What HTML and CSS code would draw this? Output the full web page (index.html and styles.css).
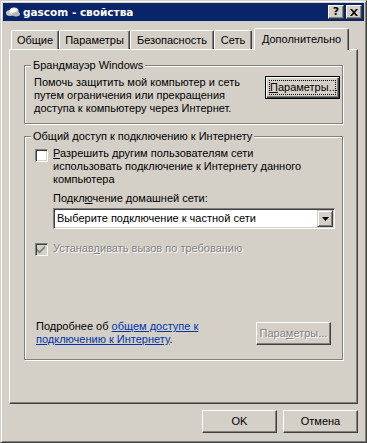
FILE: index.html
```html
<!DOCTYPE html>
<html lang="ru">
<head>
    <meta charset="UTF-8">
    <title>gascom - свойства</title>
    <link rel="stylesheet" href="styles.css">
</head>
<body>
    <div class="window">
        <div class="titlebar">
            <svg class="title-icon" width="16" height="16" viewBox="0 0 16 16">
                <ellipse cx="5" cy="9" rx="4" ry="3" fill="#c8c8c8"/>
                <ellipse cx="9" cy="7" rx="4.5" ry="3.5" fill="#e8e8e8"/>
                <ellipse cx="11" cy="10" rx="4" ry="2.5" fill="#b8b8b8"/>
                <ellipse cx="8" cy="6.5" rx="3" ry="2" fill="#fff"/>
            </svg>
            <span class="title-text">gascom - свойства</span>
            <div class="caption-btns">
                <span class="cap-btn cap-help">?</span>
                <span class="cap-btn">
                    <svg width="8" height="7" viewBox="0 0 8 7"><path d="M0 0h2l2 2.2L6 0h2L5 3.5 8 7H6L4 4.8 2 7H0l3-3.5z" fill="#000"/></svg>
                </span>
            </div>
        </div>

        <div class="client">
            <div class="tabs">
                <div class="tab tab-general">Общие</div>
                <div class="tab tab-params">Параметры</div>
                <div class="tab tab-security">Безопасность</div>
                <div class="tab tab-network">Сеть</div>
                <div class="tab tab-advanced active">Дополнительно</div>
            </div>

            <div class="panel">
                <fieldset class="group group-firewall">
                    <legend>Брандмауэр Windows</legend>
                    <div class="fw-row">
                        <p class="text">Помочь защитить мой компьютер и сеть<br>путем ограничения или прекращения<br>доступа к компьютеру через Интернет.</p>
                        <button class="btn btn-default" type="button"><span class="focus"><u>П</u>араметры...</span></button>
                    </div>
                </fieldset>

                <fieldset class="group group-ics">
                    <legend>Общий доступ к подключению к Интернету</legend>
                    <div class="check-row">
                        <span class="checkbox"></span>
                        <p class="text"><u>Р</u>азрешить другим пользователям сети<br>использовать подключение к Интернету данного<br>компьютера</p>
                    </div>
                    <p class="text home-label">Подкл<u>ю</u>чение домашней сети:</p>
                    <div class="select">
                        <span class="select-text">Выберите подключение к частной сети</span>
                        <span class="select-btn">
                            <svg width="7" height="4" viewBox="0 0 7 4"><path d="M0 0h7L3.5 4z" fill="#000"/></svg>
                        </span>
                    </div>
                    <div class="check-row dial-row">
                        <span class="checkbox checkbox-disabled">
                            <svg width="9" height="9" viewBox="0 0 9 9"><path d="M0 3.5l2.5 2.5L8 0.5V3L2.5 8.5 0 6z" fill="#808080"/></svg>
                        </span>
                        <p class="text disabled">Устанав<u>л</u>ивать вызов по требованию</p>
                    </div>
                    <div class="more-row">
                        <p class="text more-text">Подробнее об <a class="link" href="#">общем доступе к</a><br><a class="link" href="#">подключению к Интернету</a>.</p>
                        <button class="btn btn-disabled" type="button" disabled>Пара<u>м</u>етры...</button>
                    </div>
                </fieldset>
            </div>

            <div class="footer">
                <button class="btn" type="button">OK</button>
                <button class="btn" type="button">Отмена</button>
            </div>
        </div>
    </div>
</body>
</html>
```
FILE: styles.css
```css
:root {
    --face: #D4D0C8;
    --shadow: #808080;
    --dark: #404040;
    --light: #fff;
    --caption: #0A246A;
}
* {
    box-sizing: border-box;
}
html, body {
    margin: 0;
    padding: 0;
    background: var(--face);
}
body {
    font-family: "Liberation Sans", Arial, sans-serif;
    font-size: 11px;
    line-height: 13px;
    color: #000;
}
.window {
    width: 367px;
    height: 443px;
    background: var(--face);
    border: 1px solid;
    border-color: var(--face) var(--dark) var(--dark) var(--face);
    box-shadow: inset 1px 1px var(--light), inset -1px -1px var(--shadow);
    padding: 2px;
    display: flex;
    flex-direction: column;
}
.titlebar {
    height: 18px;
    flex: none;
    background: var(--caption);
    color: #fff;
    display: flex;
    align-items: center;
    padding: 0 2px 0 2px;
}
.title-icon {
    flex: none;
    margin-right: 2px;
}
.title-text {
    flex: 1;
    font-family: "DejaVu Sans", sans-serif;
    font-weight: bold;
    font-size: 10.5px;
}
.caption-btns {
    display: flex;
    gap: 2px;
}
.cap-btn {
    width: 16px;
    height: 14px;
    background: var(--face);
    border: 1px solid;
    border-color: var(--light) var(--dark) var(--dark) var(--light);
    box-shadow: inset -1px -1px var(--shadow);
    display: flex;
    align-items: center;
    justify-content: center;
    color: #000;
}
.cap-help {
    font-family: "DejaVu Sans", sans-serif;
    font-weight: bold;
    font-size: 11px;
    line-height: 12px;
}
.client {
    flex: 1;
    padding: 7px 6px 0 6px;
    display: flex;
    flex-direction: column;
}
.tabs {
    display: flex;
    align-items: flex-end;
    height: 21px;
    padding-left: 2px;
}
.tab {
    height: 19px;
    padding-top: 3px;
    text-align: center;
    white-space: nowrap;
    border: 1px solid;
    border-bottom: 0;
    border-color: var(--light) var(--dark) transparent var(--light);
    border-radius: 2px 2px 0 0;
    box-shadow: inset -1px 0 var(--shadow);
}
.tab-general { width: 48px; }
.tab-params { width: 71px; }
.tab-security { width: 84px; }
.tab-network { width: 38px; }
.tab-advanced { width: 95px; }
.tab.active {
    height: 22px;
    margin-left: 2px;
    margin-bottom: -1px;
    padding-top: 4px;
    background: var(--face);
    position: relative;
    z-index: 1;
}
.panel {
    height: 355px;
    flex: none;
    border: 1px solid;
    border-color: var(--light) var(--dark) var(--dark) var(--light);
    box-shadow: inset -1px -1px var(--shadow);
    padding: 9px 13px 0 14px;
}
.group {
    width: 319px;
    min-width: 0;
    margin: 0;
    border: 1px solid var(--shadow);
    box-shadow: inset 1px 1px var(--light), 1px 1px var(--light);
}
.group legend {
    padding: 0 2px;
    line-height: 13px;
    background: var(--face);
    white-space: nowrap;
}
.group-firewall {
    padding: 4px 2px 8px 9px;
}
.group-firewall legend {
    margin-left: -3px;
}
.group-ics {
    margin-top: 6px;
    padding: 4px 2px 13px 10px;
}
.group-ics legend {
    margin-left: -4px;
}
.text {
    margin: 0;
    white-space: nowrap;
}
.fw-row {
    display: flex;
    justify-content: space-between;
    align-items: flex-start;
}
.btn {
    width: 75px;
    height: 23px;
    flex: none;
    padding: 0;
    font: inherit;
    color: #000;
    background: var(--face);
    border: 1px solid;
    border-color: var(--light) var(--dark) var(--dark) var(--light);
    box-shadow: inset -1px -1px var(--shadow);
}
.btn-default {
    border-color: #000;
    box-shadow: inset 1px 1px var(--light), inset -1px -1px var(--dark), inset -2px -2px var(--shadow);
}
.focus {
    display: block;
    margin: 0 3px;
    height: 15px;
    line-height: 13px;
    border: 1px dotted #000;
}
.btn-disabled {
    color: var(--shadow);
    text-shadow: 1px 1px 0 var(--light);
}
.check-row {
    display: flex;
    align-items: flex-start;
    gap: 5px;
}
.checkbox {
    width: 13px;
    height: 13px;
    flex: none;
    margin-top: 2px;
    background: #fff;
    border: 1px solid;
    border-color: var(--shadow) var(--light) var(--light) var(--shadow);
    box-shadow: inset 1px 1px var(--dark), inset -1px -1px var(--face);
    display: flex;
    align-items: center;
    justify-content: center;
}
.checkbox-disabled {
    background: var(--face);
    margin-top: 1px;
}
.home-label {
    margin: 6px 0 0 18px;
}
.select {
    width: 282px;
    height: 21px;
    margin: 3px 0 0 18px;
    display: flex;
    align-items: center;
    background: #fff;
    border: 1px solid;
    border-color: var(--shadow) var(--light) var(--light) var(--shadow);
    box-shadow: inset 1px 1px var(--dark), inset -1px -1px var(--face);
    padding: 1px 1px 1px 2px;
}
.select-text {
    flex: 1;
    padding-left: 1px;
    white-space: nowrap;
}
.select-btn {
    width: 16px;
    height: 17px;
    flex: none;
    background: var(--face);
    border: 1px solid;
    border-color: var(--face) var(--dark) var(--dark) var(--face);
    box-shadow: inset 1px 1px var(--light), inset -1px -1px var(--shadow);
    display: flex;
    align-items: center;
    justify-content: center;
}
.dial-row {
    margin-top: 13px;
}
.disabled {
    color: var(--shadow);
    text-shadow: 1px 1px 0 var(--light);
}
.more-row {
    margin-top: 64px;
    padding-right: 9px;
    display: flex;
    align-items: center;
    justify-content: space-between;
}
.more-text {
    margin-left: 1px;
}
.link {
    color: #0033AA;
    text-decoration: underline;
}
.footer {
    margin-top: 6px;
    display: flex;
    justify-content: flex-end;
    gap: 6px;
}
```
